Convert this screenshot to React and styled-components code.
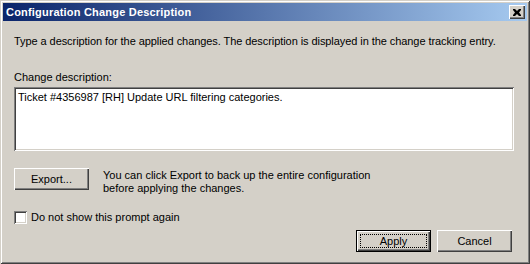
import React from 'react';
import styled, { createGlobalStyle } from 'styled-components';

const Global = createGlobalStyle`
  html, body { margin: 0; padding: 0; background: #d4d0c8; }
  body { font-family: "Liberation Sans", Arial, sans-serif; font-size: 11px; color: #000; }
`;

export default function App() {
  return (
    <>
      <Global />
      <Window>
        <TitleBar>
          <Title>Configuration Change Description</Title>
          <CloseButton aria-label="Close">
            <svg width="8" height="7" viewBox="0 0 8 7">
              <path d="M0 0h2l2 2 2-2h2v1l-2 2.5 2 2.5v1h-2l-2-2-2 2h-2v-1l2-2.5-2-2.5z" fill="#000" />
            </svg>
          </CloseButton>
        </TitleBar>
        <Body>
          <Intro>Type a description for the applied changes. The description is displayed in the change tracking entry.</Intro>
          <Label>Change description:</Label>
          <TextBox>Ticket #4356987 [RH] Update URL filtering categories.</TextBox>
          <ExportRow>
            <Button>Export...</Button>
            <Hint>
              You can click Export to back up the entire configuration<br />
              before applying the changes.
            </Hint>
          </ExportRow>
          <CheckRow>
            <CheckBox />
            <span>Do not show this prompt again</span>
          </CheckRow>
          <Actions>
            <Button primary><Focus>Apply</Focus></Button>
            <Button>Cancel</Button>
          </Actions>
        </Body>
      </Window>
    </>
  );
}

const Window = styled.div`
  width: 530px;
  height: 264px;
  box-sizing: border-box;
  padding: 3px;
  background: #d4d0c8;
  box-shadow: inset 1px 1px 0 #d4d0c8, inset -1px -1px 0 #404040,
    inset 2px 2px 0 #fff, inset -2px -2px 0 #808080;
  display: flex;
  flex-direction: column;
`;

const TitleBar = styled.div`
  height: 18px;
  display: flex;
  align-items: center;
  justify-content: space-between;
  padding: 0 2px 0 3px;
  background: linear-gradient(to right, #0a246a, #a6caf0);
`;

const Title = styled.div`
  color: #fff;
  font-weight: bold;
  font-size: 11px;
  letter-spacing: 0.2px;
`;

const CloseButton = styled.div`
  width: 16px;
  height: 14px;
  box-sizing: border-box;
  display: flex;
  align-items: center;
  justify-content: center;
  background: #d4d0c8;
  box-shadow: inset 1px 1px 0 #fff, inset -1px -1px 0 #404040,
    inset -2px -2px 0 #808080;
`;

const Body = styled.div`
  flex: 1;
  display: flex;
  flex-direction: column;
  padding: 14px 13px 0 11px;
  line-height: 13px;
`;

const Intro = styled.div`
  letter-spacing: -0.07px;
`;

const Label = styled.div`
  margin-top: 23px;
`;

const TextBox = styled.div`
  margin-top: 3px;
  height: 64px;
  box-sizing: border-box;
  padding: 4px 4px;
  background: #fff;
  box-shadow: inset 1px 1px 0 #808080, inset -1px -1px 0 #fff,
    inset 2px 2px 0 #404040, inset -2px -2px 0 #d4d0c8;
`;

const ExportRow = styled.div`
  margin-top: 17px;
  display: flex;
  align-items: flex-start;
  gap: 14px;
`;

const Hint = styled.div`
  margin-top: 1px;
`;

const Button = styled.div`
  width: 75px;
  height: 22px;
  box-sizing: border-box;
  flex: none;
  display: flex;
  align-items: center;
  justify-content: center;
  background: #d4d0c8;
  box-shadow: ${p => p.primary
    ? 'inset 0 0 0 1px #000, inset 2px 2px 0 #fff, inset -2px -2px 0 #404040, inset -3px -3px 0 #808080'
    : 'inset 1px 1px 0 #fff, inset -1px -1px 0 #404040, inset -2px -2px 0 #808080'};
`;

const Focus = styled.div`
  width: 67px;
  height: 14px;
  box-sizing: border-box;
  border: 1px dotted #000;
  display: flex;
  align-items: center;
  justify-content: center;
`;

const CheckRow = styled.div`
  margin-top: 16px;
  display: flex;
  align-items: center;
  gap: 4px;
`;

const CheckBox = styled.div`
  width: 13px;
  height: 13px;
  box-sizing: border-box;
  background: #fff;
  box-shadow: inset 1px 1px 0 #808080, inset -1px -1px 0 #fff,
    inset 2px 2px 0 #404040, inset -2px -2px 0 #d4d0c8;
`;

const Actions = styled.div`
  margin-top: 6px;
  display: flex;
  justify-content: flex-end;
  gap: 6px;
  padding-right: 2px;
`;
